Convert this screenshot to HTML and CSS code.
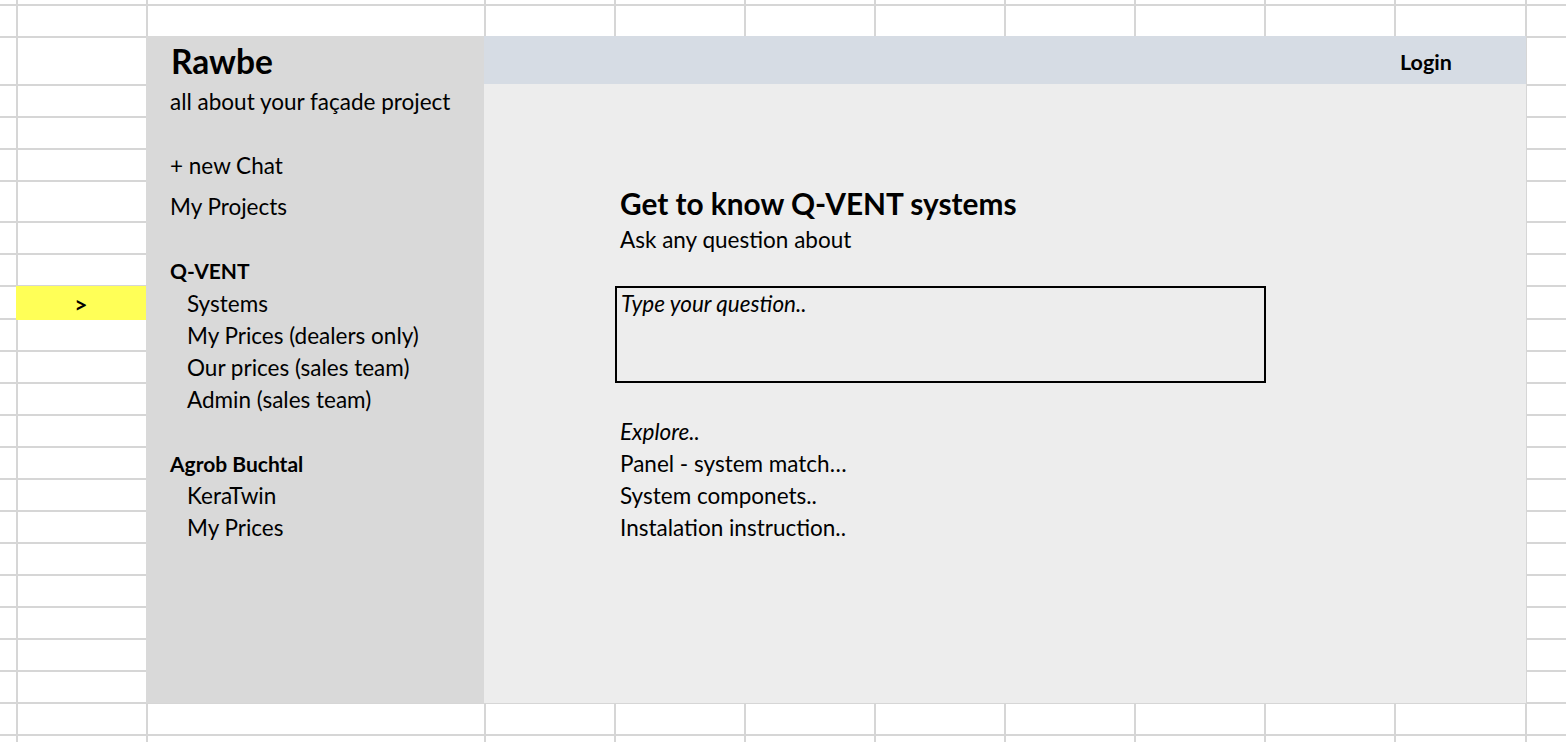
FILE: index.html
```html
<!DOCTYPE html>
<html lang="en">
<head>
<meta charset="utf-8">
<title>Rawbe</title>
<link rel="stylesheet" href="styles.css">
</head>
<body>
<div class="sheet">
  <div class="gutter">
    <div class="marker">&gt;</div>
  </div>
  <div class="app">
    <aside class="sidebar">
      <div class="brand">Rawbe</div>
      <div class="tagline">all about your façade project</div>
      <nav class="group">
        <div class="item">+ new Chat</div>
        <div class="item tall">My Projects</div>
      </nav>
      <div class="group">
        <div class="item heading">Q-VENT</div>
        <div class="item sub first">Systems</div>
        <div class="item sub">My Prices (dealers only)</div>
        <div class="item sub">Our prices (sales team)</div>
        <div class="item sub">Admin (sales team)</div>
      </div>
      <div class="group">
        <div class="item heading">Agrob Buchtal</div>
        <div class="item sub">KeraTwin</div>
        <div class="item sub">My Prices</div>
      </div>
    </aside>
    <div class="content">
      <header class="topbar">
        <div class="login">Login</div>
      </header>
      <main class="main">
        <h1 class="title">Get to know Q-VENT systems</h1>
        <p class="lead">Ask any question about</p>
        <div class="ask">Type your question..</div>
        <div class="explore">
          <div class="item em">Explore..</div>
          <div class="item">Panel - system match…</div>
          <div class="item">System componets..</div>
          <div class="item">Instalation instruction..</div>
        </div>
      </main>
    </div>
  </div>
</div>
</body>
</html>
```

FILE: styles.css
```css
html, body {
  margin: 0;
  padding: 0;
}

body {
  font-family: "Lato", "Open Sans", sans-serif;
  font-size: 22.5px;
  color: #000;
  background: #fff;
}

.sheet {
  width: 1566px;
  height: 742px;
  box-sizing: border-box;
  padding-top: 36px;
  display: flex;
  align-items: flex-start;
  overflow: hidden;
  background-color: #fff;
  background-image:
    linear-gradient(90deg,
      transparent 16px, #d6d6d6 16px 18px,
      transparent 18px 146px, #d6d6d6 146px 148px,
      transparent 148px 484px, #d6d6d6 484px 486px,
      transparent 486px 614px, #d6d6d6 614px 616px,
      transparent 616px 744px, #d6d6d6 744px 746px,
      transparent 746px 874px, #d6d6d6 874px 876px,
      transparent 876px 1004px, #d6d6d6 1004px 1006px,
      transparent 1006px 1134px, #d6d6d6 1134px 1136px,
      transparent 1136px 1264px, #d6d6d6 1264px 1266px,
      transparent 1266px 1394px, #d6d6d6 1394px 1396px,
      transparent 1396px 1525px, #d6d6d6 1525px 1527px,
      transparent 1527px),
    linear-gradient(180deg,
      transparent 4px, #d6d6d6 4px 6px,
      transparent 6px 36px, #d6d6d6 36px 38px,
      transparent 38px 84px, #d6d6d6 84px 86px,
      transparent 86px 116px, #d6d6d6 116px 118px,
      transparent 118px 148px, #d6d6d6 148px 150px,
      transparent 150px 180px, #d6d6d6 180px 182px,
      transparent 182px 221px, #d6d6d6 221px 223px,
      transparent 223px 253px, #d6d6d6 253px 255px,
      transparent 255px 285px, #d6d6d6 285px 287px,
      transparent 287px 318px, #d6d6d6 318px 320px,
      transparent 320px 350px, #d6d6d6 350px 352px,
      transparent 352px 382px, #d6d6d6 382px 384px,
      transparent 384px 414px, #d6d6d6 414px 416px,
      transparent 416px 446px, #d6d6d6 446px 448px,
      transparent 448px 478px, #d6d6d6 478px 480px,
      transparent 480px 510px, #d6d6d6 510px 512px,
      transparent 512px 542px, #d6d6d6 542px 544px,
      transparent 544px 574px, #d6d6d6 574px 576px,
      transparent 576px 606px, #d6d6d6 606px 608px,
      transparent 608px 638px, #d6d6d6 638px 640px,
      transparent 640px 670px, #d6d6d6 670px 672px,
      transparent 672px 702px, #d6d6d6 702px 704px,
      transparent 704px 734px, #d6d6d6 734px 736px,
      transparent 736px);
}

/* left gutter column with the highlighted row marker */
.gutter {
  width: 146px;
  flex: none;
  padding-top: 250px;
}

.marker {
  margin-left: 16px;
  width: 130px;
  height: 34px;
  background: #ffff57;
  display: flex;
  align-items: center;
  justify-content: center;
  font-weight: 700;
  font-size: 23px;
  padding-top: 1px;
  box-sizing: border-box;
}

/* application panel */
.app {
  width: 1380px;
  height: 667px;
  flex: none;
  display: flex;
}

.sidebar {
  width: 338px;
  flex: none;
  box-sizing: border-box;
  background: #d9d9d9;
  padding-left: 24px;
  display: flex;
  flex-direction: column;
}

.brand {
  height: 48px;
  display: flex;
  align-items: center;
  font-weight: 700;
  font-size: 33.5px;
  padding-top: 2px;
  padding-left: 1px;
  box-sizing: border-box;
}

.tagline {
  height: 33px;
  display: flex;
  align-items: center;
  padding-top: 2px;
  box-sizing: border-box;
}

.group {
  margin-top: 32px;
  display: flex;
  flex-direction: column;
}

.item {
  height: 32px;
  display: flex;
  align-items: center;
  padding-top: 1px;
  box-sizing: border-box;
  white-space: nowrap;
}

.item.tall {
  height: 41px;
  padding-top: 9px;
}

.item.heading {
  font-weight: 700;
  font-size: 21px;
}

.item.sub {
  padding-left: 17px;
}

.item.sub.first {
  height: 33px;
}

.content {
  flex: 1;
  display: flex;
  flex-direction: column;
}

.topbar {
  height: 48px;
  flex: none;
  background: #d6dce4;
  display: flex;
  justify-content: flex-end;
}

.login {
  width: 131px;
  box-sizing: border-box;
  padding-left: 5px;
  padding-top: 3px;
  display: flex;
  align-items: center;
  font-weight: 700;
  font-size: 21.5px;
}

.main {
  flex: 1;
  background: #ededed;
  padding: 97px 0 0 131px;
  display: flex;
  flex-direction: column;
}

.title {
  margin: 0;
  height: 41px;
  padding-left: 5px;
  display: flex;
  align-items: center;
  padding-top: 4px;
  box-sizing: border-box;
  font-size: 29.8px;
  font-weight: 700;
}

.lead {
  margin: 0;
  height: 32px;
  padding-left: 5px;
  display: flex;
  align-items: center;
  padding-top: 2px;
  box-sizing: border-box;
}

.ask {
  margin-top: 32px;
  width: 651px;
  height: 97px;
  box-sizing: border-box;
  border: 2px solid #000;
  padding: 1px 4px;
  font-style: italic;
  line-height: 30px;
}

.explore {
  margin-top: 32px;
  display: flex;
  flex-direction: column;
}

.explore .item {
  padding-left: 5px;
}

.em {
  font-style: italic;
}
```
